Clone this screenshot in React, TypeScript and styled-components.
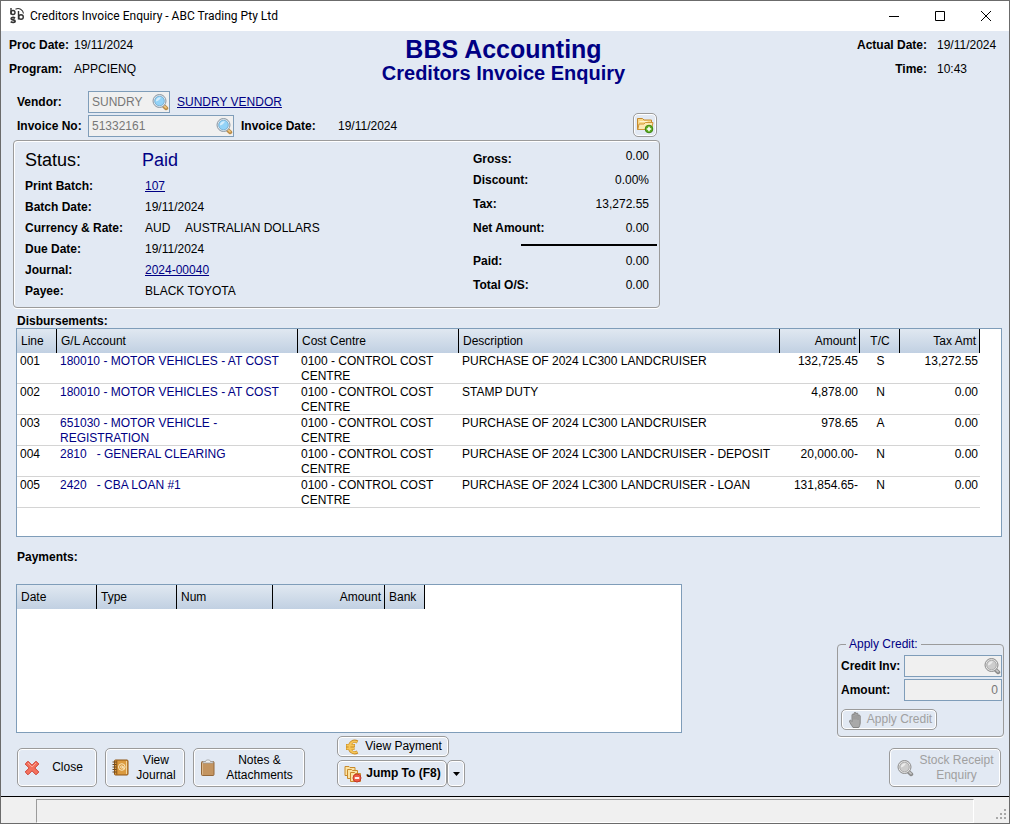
import React from "react";
import styled, { createGlobalStyle, css } from "styled-components";

const c = {
  face: "#e2e9f3",
  edge: "#9b9b9b",
  fieldEdge: "#7f9db9",
  navy: "#000084",
  muted: "#777777",
  disabled: "#a0a0a0",
  bar: "#f0f0f0",
};

const GlobalStyle = createGlobalStyle`
  *, *::before, *::after { box-sizing: border-box; }
  body { margin: 0; background: ${c.face}; }
  body, button, input { font: 12px/15px "Liberation Sans", Arial, sans-serif; color: #000; }
  h1, h2, h3, p, dl, dd, dt { margin: 0; font-size: inherit; }
  svg { display: block; flex: none; }
`;

const Window = styled.div`
  display: flex;
  flex-direction: column;
  min-height: 100vh;
  border: 1px solid #6b6b6b;
  background: ${c.face};
`;

/* Title bar */
const TitleBar = styled.header`
  display: flex;
  align-items: center;
  height: 30px;
  padding-left: 8px;
  background: #fff;
`;

const WindowTitle = styled.span`
  flex: 1;
  padding-left: 5px;
  font-family: Roboto, "Noto Sans", sans-serif;
  font-size: 12px;
  line-height: 16px;
  white-space: nowrap;
`;

const WindowButton = styled.button`
  display: flex;
  align-items: center;
  justify-content: center;
  width: 46px;
  height: 30px;
  padding: 0;
  border: 0;
  background: none;
`;

/* Page heading */
const Heading = styled.div`
  display: grid;
  grid-template-columns: 1fr auto 1fr;
  padding: 2px 11px 0 8px;
`;

const Facts = styled.dl<{ $right?: boolean }>`
  display: grid;
  grid-template-columns: 65px auto;
  grid-auto-rows: 24px;
  align-items: center;
  justify-content: start;
  align-content: start;
  white-space: nowrap;
  ${(p) =>
    p.$right &&
    css`
      grid-template-columns: auto 61px;
      justify-content: end;
      column-gap: 10px;
      dt { text-align: right; }
    `}
  dt { font-weight: bold; }
`;

const Titles = styled.div`
  padding-top: 3px;
  color: ${c.navy};
  font-weight: bold;
  text-align: center;
`;

const AppTitle = styled.h1`
  font-size: 25px;
  line-height: 26px;
`;

const ProgramTitle = styled.h2`
  font-size: 20px;
  line-height: 22px;
`;

/* Lookup form */
const LookupForm = styled.div`
  display: flex;
  align-items: flex-end;
  justify-content: space-between;
  width: 100%;
  max-width: 656px;
  padding: 7px 0 0 16px;
`;

const LookupRows = styled.div`
  display: flex;
  flex-direction: column;
  gap: 2px;
`;

const FormRow = styled.div`
  display: flex;
  align-items: center;
  height: 22px;
`;

const Label = styled.label<{ $width: number }>`
  flex: none;
  width: ${(p) => p.$width}px;
  font-weight: bold;
  white-space: nowrap;
`;

const Caption = styled.span<{ $width: number }>`
  flex: none;
  width: ${(p) => p.$width}px;
  font-weight: bold;
`;

const Field = styled.div<{ $width: number }>`
  display: flex;
  align-items: center;
  width: ${(p) => p.$width}px;
  height: 22px;
  margin-right: 7px;
  border: 1px solid ${c.fieldEdge};
  background: ${c.bar};
  &:last-child { margin-right: 0; }
`;

const FieldInput = styled.input<{ $right?: boolean }>`
  flex: 1;
  min-width: 0;
  padding: 0 3px;
  border: 0;
  outline: 0;
  background: none;
  color: ${c.muted};
  text-align: ${(p) => (p.$right ? "right" : "left")};
`;

const LookupButton = styled.button`
  padding: 0;
  border: 0;
  background: none;
`;

const Link = styled.a`
  color: ${c.navy};
  text-decoration: underline;
  text-underline-offset: 1px;
`;

/* Rounded push buttons with an etched edge */
const PushButton = styled.button<{ $width: number; $height: number; $bold?: boolean }>`
  display: flex;
  align-items: center;
  flex: none;
  width: ${(p) => p.$width}px;
  height: ${(p) => p.$height}px;
  padding: 0 1px 0 6px;
  border: 1px solid ${c.edge};
  border-radius: 5px;
  background: ${c.face};
  box-shadow: inset 0 0 0 1px #fff;
  font-weight: ${(p) => (p.$bold ? "bold" : "normal")};
  &:disabled { color: ${c.disabled}; }
`;

const ButtonText = styled.span`
  flex: 1;
  text-align: center;
`;

const IconButton = styled(PushButton)`
  justify-content: center;
  padding: 0;
`;

/* Summary panel */
const Summary = styled.section`
  display: flex;
  justify-content: space-between;
  max-width: 647px;
  margin: 3px 0 0 12px;
  padding: 5px 2px 5px 10px;
  border: 1px solid ${c.edge};
  border-radius: 4px;
  box-shadow: inset 1px 1px 0 #fff, 0 1px 0 #fff;
`;

const Details = styled.div`
  display: flex;
  flex-direction: column;
  padding: 1px 0 0 1px;
`;

const StatusLine = styled.div`
  display: grid;
  grid-template-columns: 117px auto;
  margin-bottom: 3px;
  font-size: 18px;
  line-height: 26px;
  span:last-child { color: ${c.navy}; }
`;

const DetailList = styled.dl`
  display: grid;
  grid-template-columns: 120px auto;
  grid-auto-rows: 21px;
  align-items: center;
  dt { font-weight: bold; }
`;

const CurrencyCode = styled.span`
  display: inline-block;
  width: 40px;
`;

const Totals = styled.dl`
  width: 184px;
`;

const TotalRow = styled.div<{ $first?: boolean }>`
  display: flex;
  align-items: center;
  justify-content: space-between;
  height: 24px;
  padding-right: 8px;
  ${(p) =>
    p.$first &&
    css`
      height: 18px;
      margin: 3px 0 1px;
      dt { align-self: flex-end; }
      dd { align-self: flex-start; }
    `}
  dt { font-weight: bold; }
`;

const TotalRule = styled.div`
  height: 2px;
  margin: 4px 0 3px 48px;
  background: #000;
`;

/* Grids */
const SectionTitle = styled.h3`
  padding-left: 1px;
  font-weight: bold;
  line-height: 14px;
`;

const Disbursements = styled.section`
  padding: 6px 7px 0 15px;
`;

const GridFrame = styled.div<{ $height: number; $gutter?: boolean }>`
  min-height: ${(p) => p.$height}px;
  padding-right: ${(p) => (p.$gutter ? 21 : 0)}px;
  border: 1px solid ${c.fieldEdge};
  background: #fff;
`;

const Grid = styled.table<{ $fill?: boolean }>`
  width: ${(p) => (p.$fill ? "100%" : "408px")};
  border-collapse: separate;
  border-spacing: 0;
  table-layout: fixed;
`;

type Align = "left" | "right" | "center";

const HeadCell = styled.th<{ $align?: Align; $width?: number }>`
  width: ${(p) => (p.$width ? `${p.$width}px` : "auto")};
  height: 24px;
  padding: 0 3px 0 4px;
  border-right: 1px solid #000;
  background: linear-gradient(#e0e8f1, #c1d0e2);
  font-weight: normal;
  text-align: ${(p) => p.$align || "left"};
`;

const Cell = styled.td<{ $align?: Align; $account?: boolean }>`
  height: 31px;
  padding: 0 2px 0 3px;
  box-shadow: inset 0 -1px 0 #d4d4d4;
  color: ${(p) => (p.$account ? c.navy : "#000")};
  text-align: ${(p) => p.$align || "left"};
  vertical-align: top;
  padding-top: 1px;
  white-space: pre-wrap;
`;

/* Lower area */
const Lower = styled.div`
  display: flex;
  justify-content: space-between;
  gap: 16px;
  padding: 13px 5px 9px 15px;
`;

const LowerLeft = styled.div`
  flex: 1;
  max-width: 666px;
`;

const LowerRight = styled.div`
  display: flex;
  flex-direction: column;
  justify-content: flex-end;
  align-items: flex-end;
  gap: 11px;
`;

const PaymentsFrame = styled(GridFrame)`
  margin-top: 20px;
`;

const Actions = styled.div`
  display: flex;
  align-items: flex-end;
  gap: 8px;
  padding: 3px 0 0 1px;
`;

const ActionStack = styled.div`
  display: flex;
  flex-direction: column;
  gap: 3px;
  margin-left: 24px;
`;

const SplitButton = styled.div`
  display: flex;
`;

const CreditBox = styled.fieldset`
  width: 167px;
  margin: 0;
  padding: 3px 1px 6px 3px;
  border: 1px solid ${c.edge};
  border-radius: 4px;
  box-shadow: 0 1px 0 #fff;
`;

const CreditLegend = styled.legend`
  margin-left: 5px;
  padding: 0 3px;
  color: ${c.navy};
`;

const CreditRows = styled.div`
  display: flex;
  flex-direction: column;
  gap: 2px;
  margin-bottom: 8px;
`;

const StockSlot = styled.div`
  padding-right: 3px;
`;

/* Status bar */
const StatusBar = styled.footer`
  display: flex;
  height: 27px;
  margin-top: auto;
  padding-top: 2px;
  border-top: 1px solid #000;
  background: ${c.bar};
`;

const StatusPane = styled.div`
  flex: 1;
  margin-left: 35px;
  border: 1px solid;
  border-color: ${c.edge} #fff #fff ${c.edge};
`;

const Grip = styled.div`
  display: flex;
  align-items: flex-end;
  justify-content: flex-end;
  width: 35px;
  padding: 0 2px 3px 0;
`;

/* Icons */
function AppMark() {
  return (
    <svg width="16" height="18" viewBox="0 0 16 18" fill="none" stroke="#333" strokeWidth="1.4">
      <path d="M2 1v6.500" />
      <circle cx="4" cy="5.500" r="2" />
      <path d="M6.500 2.200C10 .4 14 2.500 14.500 6.500" strokeWidth="1.100" />
      <path d="M9.500 4v8.500" />
      <circle cx="12" cy="10" r="2.300" />
      <path d="M6 11.200c-1.500-1.200-4.200-.7-3.700.8.500 1.300 3.800.6 3.800 2.300 0 1.500-3 1.500-4.400.3" strokeWidth="1.800" />
    </svg>
  );
}

function Magnifier({ gray }: { gray?: boolean }) {
  return (
    <svg width="18" height="18" viewBox="0 0 18 18">
      <path d="M13 13.200l2.200 2" stroke={gray ? "#8a8a8a" : "#b98a45"} strokeWidth="4" strokeLinecap="round" />
      <path d="M13 12.800l2 1.900" stroke={gray ? "#c4c4c4" : "#f0c67c"} strokeWidth="1.800" strokeLinecap="round" />
      <circle cx="8.500" cy="8" r="6.500" fill={gray ? "#e6e6e6" : "#dfe6ec"} stroke={gray ? "#8c8c8c" : "#8b98a4"} />
      <circle cx="8.500" cy="8" r="4.800" fill={gray ? "#cdcdcd" : "#93d3f8"} stroke={gray ? "#a2a2a2" : "#6ea9cf"} strokeWidth=".8" />
      <path d="M4.800 8.500C4.800 5.500 7 3.800 10 4.200 9 6.500 7.500 8 4.800 8.500z" fill="#fff" opacity=".6" />
    </svg>
  );
}

function FolderAdd() {
  return (
    <svg width="18" height="18" viewBox="0 0 18 18">
      <path d="M1.500 13.500v-11h5l1.500 1.500h7.500v9.500z" fill="#f7d88a" stroke="#c58a2e" />
      <path d="M3 8h5l1.500-1.500H17l-1.500 7H1.800z" fill="#fce9b2" stroke="#cf9638" />
      <path d="M3.500 5.500h8" stroke="#fff4d2" />
      <circle cx="13" cy="13" r="3.800" fill="#5fae1e" stroke="#3b8410" />
      <path d="M13 10.800v4.400M10.800 13h4.400" stroke="#fff" strokeWidth="1.500" />
    </svg>
  );
}

function CrossIcon() {
  return (
    <svg width="16" height="16" viewBox="0 0 16 16">
      <path
        d="M4 1.200l4 4 4-4L14.800 4l-4 4 4 4-2.800 2.800-4-4-4 4L1.200 12l4-4-4-4z"
        fill="#f4725e"
        stroke="#cf3f32"
        strokeLinejoin="round"
      />
      <path d="M4 3l4 4 4-4" fill="none" stroke="#fba797" />
    </svg>
  );
}

function JournalIcon() {
  return (
    <svg width="17" height="17" viewBox="0 0 17 17">
      <rect x="2.500" y="1" width="13.500" height="15" rx="1" fill="#db9a3e" stroke="#8f5514" />
      <path d="M14.500 2v13" stroke="#f3d49a" />
      <path d="M4.800 1.500v14" stroke="#8f5514" />
      <path d="M.5 3h4M.5 5.500h4M.5 8h4M.5 10.500h4M.5 13h4" stroke="#6d4a22" />
      <circle cx="9.800" cy="8" r="3.300" fill="none" stroke="#fbe8c0" strokeWidth="1" />
      <circle cx="9.800" cy="8" r="1.200" fill="none" stroke="#fbe8c0" />
      <path d="M11 7v2.200h1.500" fill="none" stroke="#fbe8c0" />
    </svg>
  );
}

function ClipboardIcon() {
  return (
    <svg width="16" height="18" viewBox="0 0 16 18">
      <rect x="1.500" y="2.500" width="12.500" height="14" rx="1" fill="#c39460" stroke="#94683a" />
      <path d="M2.500 4v11.500" stroke="#dab68a" />
      <path d="M3 4V2.500h2.500L6.500 1h3l1 1.500H13V4z" fill="#f0f0f0" stroke="#9c9c9c" strokeWidth=".8" />
    </svg>
  );
}

function EuroIcon() {
  return (
    <svg width="16" height="16" viewBox="0 0 16 16" fill="none">
      <path d="M13.500 3C9.500.8 5.500 3.500 5.500 8s4 7.200 8 5M2 6.500h9M2 9.500h8.500" stroke="#c88d26" strokeWidth="3.200" />
      <path d="M13 3C9.500 1.200 5.500 3.500 5.500 8s4 6.800 7.500 5M2.500 6.500h8M2.500 9.500h7.500" stroke="#f6c65a" strokeWidth="1.800" />
    </svg>
  );
}

function FoldersIcon() {
  return (
    <svg width="18" height="18" viewBox="0 0 18 18">
      <g fill="#fbe3a4" stroke="#c88a2c">
        <path d="M1 10.500v-9h4l1 1h5v8z" />
        <path d="M3.500 13.500v-9h4l1 1h5v8z" />
        <path d="M6.500 16.500v-9h4l1 1h5v8z" />
      </g>
      <circle cx="13" cy="13" r="4" fill="#ee5b45" stroke="#c23a28" />
      <path d="M10.800 13h4.400" stroke="#fff" strokeWidth="1.800" />
    </svg>
  );
}

function HandIcon() {
  return (
    <svg width="16" height="18" viewBox="0 0 16 18">
      <path
        d="M5 16.500C3.500 14 1.500 11.500 1.500 10c.3-1.200 1.500-1 2.500.5V4c.2-1.300 1.800-1.300 2 0V2.300c.2-1.300 1.900-1.300 2 0V3c.2-1.200 1.900-1.200 2 0v1.800c.3-1.100 2-1 2.200.2V12c0 2-.8 3-1.400 4.500z"
        fill="#a9a9a9"
        stroke="#868686"
      />
      <path d="M6 4.500v4M8 3.500v5M10 5v4" stroke="#8c8c8c" strokeWidth=".8" />
    </svg>
  );
}

const disbursements = [
  ["001", "180010 - MOTOR VEHICLES - AT COST", "PURCHASE OF 2024 LC300 LANDCRUISER", "132,725.45", "S", "13,272.55"],
  ["002", "180010 - MOTOR VEHICLES - AT COST", "STAMP DUTY", "4,878.00", "N", "0.00"],
  ["003", "651030 - MOTOR VEHICLE - REGISTRATION", "PURCHASE OF 2024 LC300 LANDCRUISER", "978.65", "A", "0.00"],
  ["004", "2810   - GENERAL CLEARING", "PURCHASE OF 2024 LC300 LANDCRUISER - DEPOSIT", "20,000.00-", "N", "0.00"],
  ["005", "2420   - CBA LOAN #1", "PURCHASE OF 2024 LC300 LANDCRUISER - LOAN", "131,854.65-", "N", "0.00"],
];

export default function App() {
  return (
    <Window>
      <GlobalStyle />
      <TitleBar>
        <AppMark />
        <WindowTitle>Creditors Invoice Enquiry - ABC Trading Pty Ltd</WindowTitle>
        <WindowButton aria-label="Minimise">
          <svg width="10" height="10"><path d="M0 5.500h10" stroke="#000" /></svg>
        </WindowButton>
        <WindowButton aria-label="Maximise">
          <svg width="10" height="10"><path d="M.5.500h9v9h-9z" fill="none" stroke="#000" /></svg>
        </WindowButton>
        <WindowButton aria-label="Close window">
          <svg width="10" height="10"><path d="M0 0l10 10M10 0L0 10" stroke="#000" /></svg>
        </WindowButton>
      </TitleBar>

      <Heading>
        <Facts>
          <dt>Proc Date:</dt><dd>19/11/2024</dd>
          <dt>Program:</dt><dd>APPCIENQ</dd>
        </Facts>
        <Titles>
          <AppTitle>BBS Accounting</AppTitle>
          <ProgramTitle>Creditors Invoice Enquiry</ProgramTitle>
        </Titles>
        <Facts $right>
          <dt>Actual Date:</dt><dd>19/11/2024</dd>
          <dt>Time:</dt><dd>10:43</dd>
        </Facts>
      </Heading>

      <LookupForm>
        <LookupRows>
          <FormRow>
            <Label $width={71} htmlFor="vendor">Vendor:</Label>
            <Field $width={82}>
              <FieldInput id="vendor" readOnly value="SUNDRY" />
              <LookupButton aria-label="Find vendor"><Magnifier /></LookupButton>
            </Field>
            <Link href="#vendor">SUNDRY VENDOR</Link>
          </FormRow>
          <FormRow>
            <Label $width={71} htmlFor="invoice">Invoice No:</Label>
            <Field $width={146}>
              <FieldInput id="invoice" readOnly value="51332161" />
              <LookupButton aria-label="Find invoice"><Magnifier /></LookupButton>
            </Field>
            <Caption $width={97}>Invoice Date:</Caption>
            <span>19/11/2024</span>
          </FormRow>
        </LookupRows>
        <IconButton $width={24} $height={24} aria-label="Add document"><FolderAdd /></IconButton>
      </LookupForm>

      <Summary>
        <Details>
          <StatusLine><span>Status:</span><span>Paid</span></StatusLine>
          <DetailList>
            <dt>Print Batch:</dt><dd><Link href="#batch">107</Link></dd>
            <dt>Batch Date:</dt><dd>19/11/2024</dd>
            <dt>Currency &amp; Rate:</dt><dd><CurrencyCode>AUD</CurrencyCode>AUSTRALIAN DOLLARS</dd>
            <dt>Due Date:</dt><dd>19/11/2024</dd>
            <dt>Journal:</dt><dd><Link href="#journal">2024-00040</Link></dd>
            <dt>Payee:</dt><dd>BLACK TOYOTA</dd>
          </DetailList>
        </Details>
        <Totals>
          <TotalRow $first><dt>Gross:</dt><dd>0.00</dd></TotalRow>
          <TotalRow><dt>Discount:</dt><dd>0.00%</dd></TotalRow>
          <TotalRow><dt>Tax:</dt><dd>13,272.55</dd></TotalRow>
          <TotalRow><dt>Net Amount:</dt><dd>0.00</dd></TotalRow>
          <TotalRule />
          <TotalRow><dt>Paid:</dt><dd>0.00</dd></TotalRow>
          <TotalRow><dt>Total O/S:</dt><dd>0.00</dd></TotalRow>
        </Totals>
      </Summary>

      <Disbursements>
        <SectionTitle>Disbursements:</SectionTitle>
        <GridFrame $height={209} $gutter>
          <Grid $fill>
            <thead>
              <tr>
                <HeadCell $width={40}>Line</HeadCell>
                <HeadCell $width={241}>G/L Account</HeadCell>
                <HeadCell $width={161}>Cost Centre</HeadCell>
                <HeadCell>Description</HeadCell>
                <HeadCell $width={80} $align="right">Amount</HeadCell>
                <HeadCell $width={40} $align="center">T/C</HeadCell>
                <HeadCell $width={80} $align="right">Tax Amt</HeadCell>
              </tr>
            </thead>
            <tbody>
              {disbursements.map(([line, account, description, amount, code, tax]) => (
                <tr key={line}>
                  <Cell>{line}</Cell>
                  <Cell $account>{account}</Cell>
                  <Cell>0100 - CONTROL COST CENTRE</Cell>
                  <Cell>{description}</Cell>
                  <Cell $align="right">{amount}</Cell>
                  <Cell $align="center">{code}</Cell>
                  <Cell $align="right">{tax}</Cell>
                </tr>
              ))}
            </tbody>
          </Grid>
        </GridFrame>
      </Disbursements>

      <Lower>
        <LowerLeft>
          <SectionTitle>Payments:</SectionTitle>
          <PaymentsFrame $height={149}>
            <Grid>
              <thead>
                <tr>
                  <HeadCell $width={80}>Date</HeadCell>
                  <HeadCell $width={80}>Type</HeadCell>
                  <HeadCell $width={96}>Num</HeadCell>
                  <HeadCell $width={112} $align="right">Amount</HeadCell>
                  <HeadCell $width={40}>Bank</HeadCell>
                </tr>
              </thead>
            </Grid>
          </PaymentsFrame>
          <Actions>
            <PushButton $width={80} $height={39}><CrossIcon /><ButtonText>Close</ButtonText></PushButton>
            <PushButton $width={80} $height={39}><JournalIcon /><ButtonText>View Journal</ButtonText></PushButton>
            <PushButton $width={112} $height={39}><ClipboardIcon /><ButtonText>Notes &amp; Attachments</ButtonText></PushButton>
            <ActionStack>
              <PushButton $width={112} $height={21}><EuroIcon /><ButtonText>View Payment</ButtonText></PushButton>
              <SplitButton>
                <PushButton $width={110} $height={27} $bold><FoldersIcon /><ButtonText>Jump To (F8)</ButtonText></PushButton>
                <IconButton $width={18} $height={27} aria-label="Jump to menu">
                  <svg width="7" height="4"><path d="M0 0h7L3.500 4z" fill="#000" /></svg>
                </IconButton>
              </SplitButton>
            </ActionStack>
          </Actions>
        </LowerLeft>

        <LowerRight>
          <CreditBox>
            <CreditLegend>Apply Credit:</CreditLegend>
            <CreditRows>
              <FormRow>
                <Label $width={63} htmlFor="credit">Credit Inv:</Label>
                <Field $width={98}>
                  <FieldInput id="credit" readOnly value="" />
                  <LookupButton aria-label="Find credit invoice" disabled><Magnifier gray /></LookupButton>
                </Field>
              </FormRow>
              <FormRow>
                <Label $width={63} htmlFor="amount">Amount:</Label>
                <Field $width={98}>
                  <FieldInput id="amount" $right readOnly value="0" />
                </Field>
              </FormRow>
            </CreditRows>
            <PushButton $width={96} $height={21} disabled><HandIcon /><ButtonText>Apply Credit</ButtonText></PushButton>
          </CreditBox>
          <StockSlot>
            <PushButton $width={112} $height={39} disabled><Magnifier gray /><ButtonText>Stock Receipt Enquiry</ButtonText></PushButton>
          </StockSlot>
        </LowerRight>
      </Lower>

      <StatusBar>
        <StatusPane />
        <Grip>
          <svg width="11" height="11" fill="#a8a8a8">
            <path d="M8 0h2v2H8zM8 4h2v2H8zM4 4h2v2H4zM8 8h2v2H8zM4 8h2v2H4zM0 8h2v2H0z" />
          </svg>
        </Grip>
      </StatusBar>
    </Window>
  );
}
